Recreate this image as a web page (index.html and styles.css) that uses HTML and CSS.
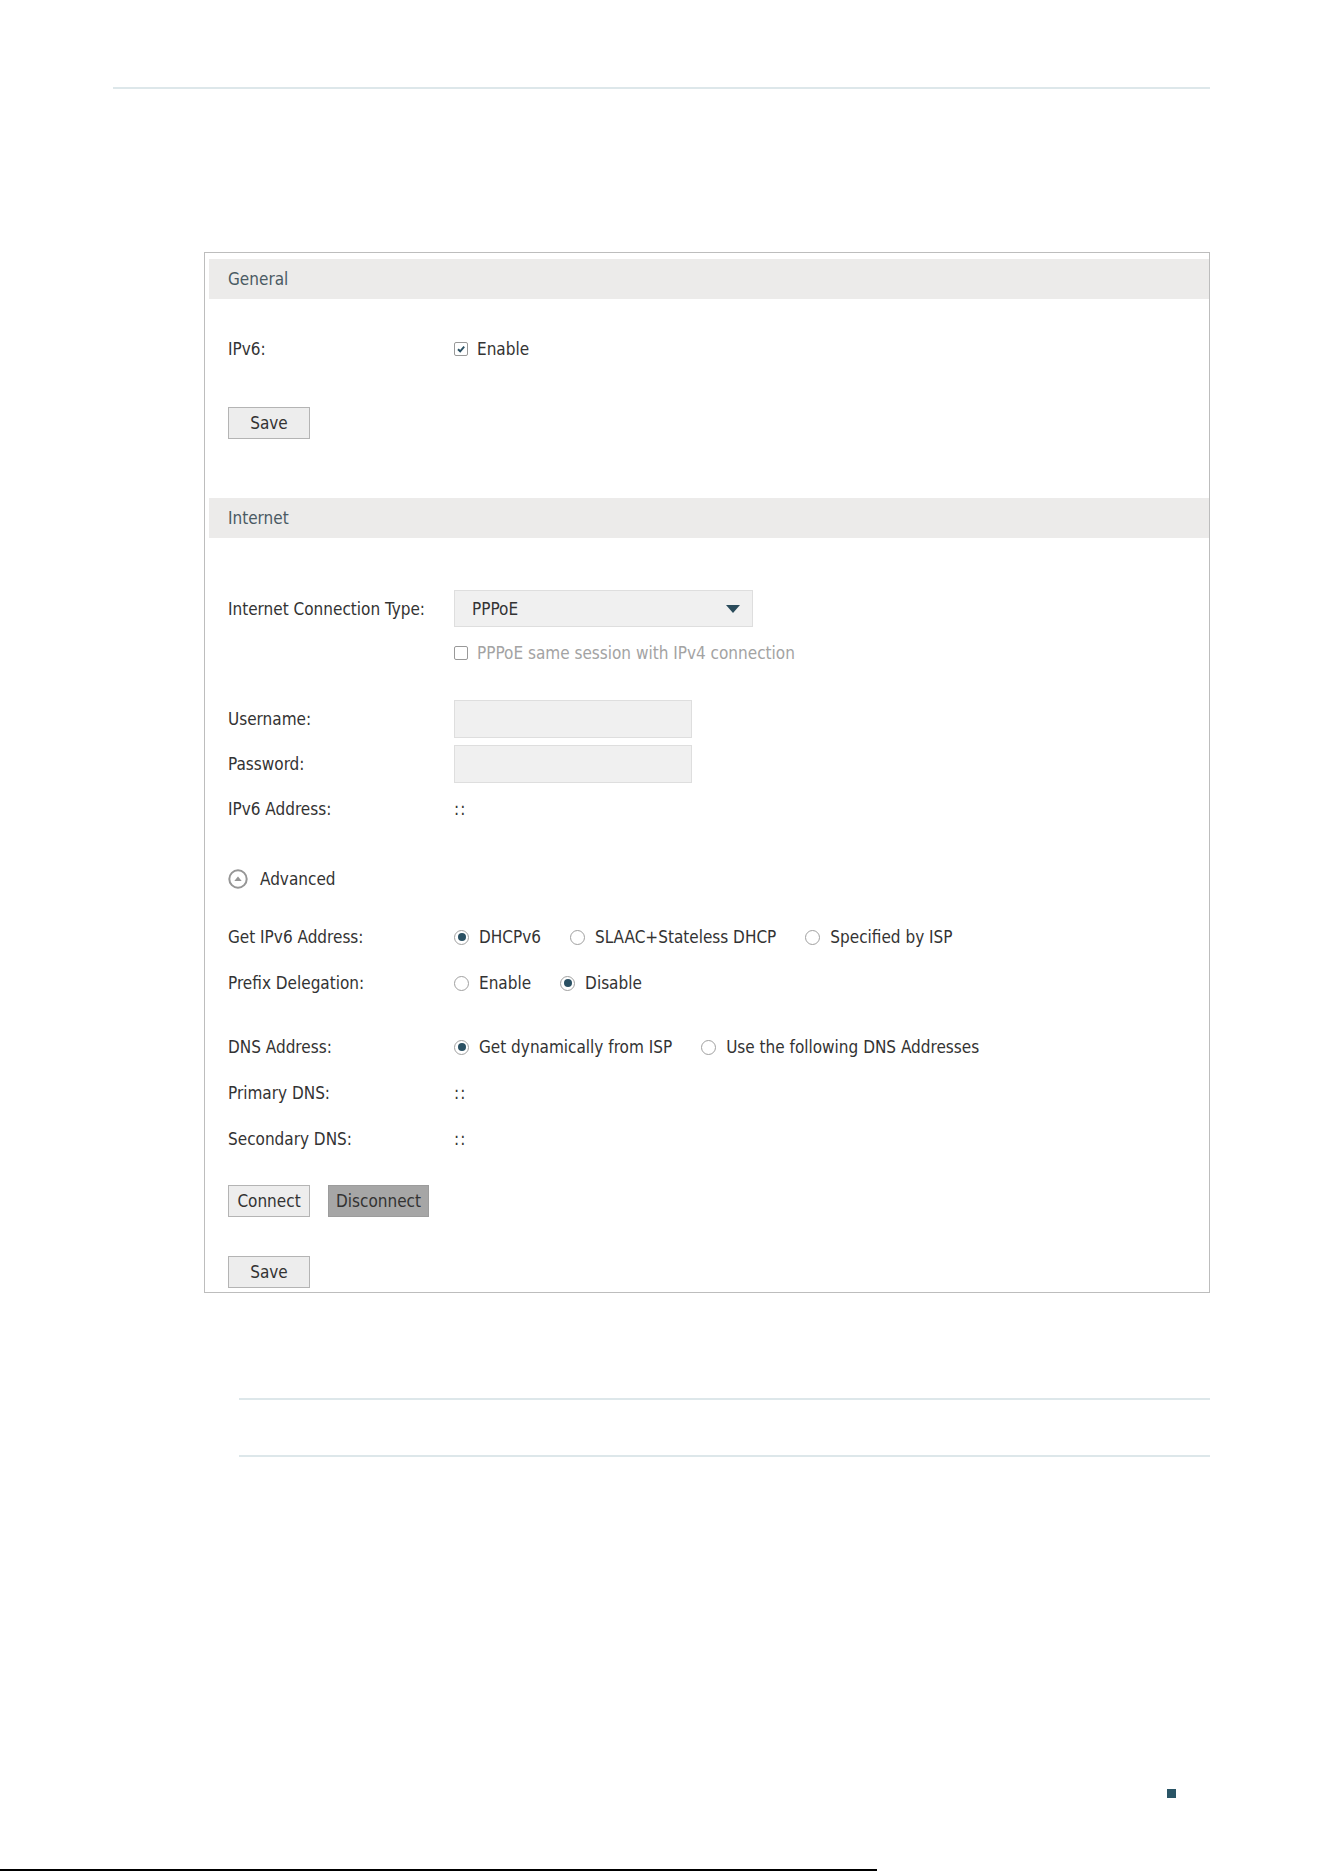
FILE: index.html
```html
<!DOCTYPE html>
<html lang="en">

<head>
    <meta charset="UTF-8">
    <meta name="viewport" content="width=device-width, initial-scale=1.0">
    <title>IPv6 | Internet</title>
    <link rel="stylesheet" href="styles.css">
</head>

<body>
    <div class="page">
        <div class="top-rule"></div>

        <div class="panel">
            <div class="section-head">General</div>
            <div class="section-body">
                <div class="row row-first">
                    <span class="label">IPv6:</span>
                    <label class="check">
                        <span class="box checked">
                            <svg viewBox="0 0 10 10" width="10" height="10"><path d="M2 5.2 L4.2 7.3 L8.2 2.6" fill="none" stroke="#2a5063" stroke-width="1.9"/></svg>
                        </span>
                        Enable
                    </label>
                </div>
                <div class="actions actions-save1">
                    <button class="btn">Save</button>
                </div>
            </div>

            <div class="section-head head-internet">Internet</div>
            <div class="section-body">
                <div class="row row-type">
                    <span class="label">Internet Connection Type:</span>
                    <div class="select">
                        <span>PPPoE</span>
                        <span class="caret"></span>
                    </div>
                </div>
                <div class="row row-tight">
                    <span class="label"></span>
                    <label class="check disabled">
                        <span class="box"></span>
                        PPPoE same session with IPv4 connection
                    </label>
                </div>
                <div class="row row-input row-user">
                    <span class="label">Username:</span>
                    <input class="field" type="text">
                </div>
                <div class="row row-input row-pass">
                    <span class="label">Password:</span>
                    <input class="field" type="password">
                </div>
                <div class="row row-tight">
                    <span class="label">IPv6 Address:</span>
                    <span class="value">::</span>
                </div>

                <div class="row row-adv">
                    <span class="adv-icon">
                        <svg viewBox="0 0 20 20" width="20" height="20">
                            <circle cx="10" cy="10" r="8.7" fill="none" stroke="#969696" stroke-width="2"/>
                            <path d="M6.3 12 L10 7.4 L13.7 12 Z" fill="#969696"/>
                        </svg>
                    </span>
                    <span class="adv-text">Advanced</span>
                </div>

                <div class="row row-getip">
                    <span class="label">Get IPv6 Address:</span>
                    <div class="options">
                        <label class="radio"><span class="dot on"></span>DHCPv6</label>
                        <label class="radio"><span class="dot"></span>SLAAC+Stateless DHCP</label>
                        <label class="radio"><span class="dot"></span>Specified by ISP</label>
                    </div>
                </div>
                <div class="row row-prefix">
                    <span class="label">Prefix Delegation:</span>
                    <div class="options">
                        <label class="radio"><span class="dot"></span>Enable</label>
                        <label class="radio"><span class="dot on"></span>Disable</label>
                    </div>
                </div>
                <div class="row row-dns">
                    <span class="label">DNS Address:</span>
                    <div class="options">
                        <label class="radio"><span class="dot on"></span>Get dynamically from ISP</label>
                        <label class="radio"><span class="dot"></span>Use the following DNS Addresses</label>
                    </div>
                </div>
                <div class="row row-follow">
                    <span class="label">Primary DNS:</span>
                    <span class="value">::</span>
                </div>
                <div class="row row-follow">
                    <span class="label">Secondary DNS:</span>
                    <span class="value">::</span>
                </div>

                <div class="actions actions-conn">
                    <button class="btn">Connect</button>
                    <button class="btn btn-dark">Disconnect</button>
                </div>
                <div class="actions actions-save2">
                    <button class="btn">Save</button>
                </div>
            </div>
        </div>

        <div class="notes">
            <div class="note-rule"></div>
            <div class="note-rule rule-second"></div>
        </div>

        <div class="page-mark"></div>
        <div class="bottom-bar"></div>
    </div>
</body>

</html>
```

FILE: styles.css
```css
body {
    margin: 0;
    font-family: "DejaVu Sans Condensed", "DejaVu Sans", sans-serif;
    font-size: 17px;
    color: #333;
    background: #fff;
}

.page {
    width: 1324px;
    height: 1872px;
    position: relative;
    overflow: hidden;
}

.top-rule {
    margin: 87px 0 0 113px;
    width: 1097px;
    height: 2px;
    background-color: #dde7ea;
}

.panel {
    margin: 163px 0 0 204px;
    width: 1006px;
    box-sizing: border-box;
    border: 1px solid #bdbdbd;
    padding: 6px 0 4px 4px;
}

.section-head {
    height: 40px;
    line-height: 40px;
    background-color: #ecebea;
    padding-left: 19px;
    color: #4a5a63;
}

.head-internet {
    margin-top: 59px;
}

.section-body {
    padding-left: 19px;
}

.row {
    display: flex;
    align-items: center;
    height: 30px;
}

.label {
    width: 226px;
    flex-shrink: 0;
}

.row-first {
    margin-top: 35px;
}

.row-type {
    height: 37px;
    margin-top: 52px;
}

.row-tight {
    margin-top: 11px;
}

.row-input {
    height: 38px;
}

.row-user {
    margin-top: 32px;
}

.row-pass {
    margin-top: 7px;
}

.row-adv {
    margin-top: 40px;
}

.row-getip {
    margin-top: 28px;
}

.row-prefix {
    margin-top: 16px;
}

.row-dns {
    margin-top: 34px;
}

.row-follow {
    margin-top: 16px;
}

.check {
    display: flex;
    align-items: center;
    gap: 9px;
}

.check.disabled {
    color: #a3a3a3;
}

.box {
    width: 12px;
    height: 12px;
    border: 1px solid #999;
    border-radius: 2px;
    display: flex;
    align-items: center;
    justify-content: center;
    background: #fff;
}

.select {
    width: 299px;
    height: 37px;
    box-sizing: border-box;
    background-color: #f0f0f0;
    border: 1px solid #dedede;
    display: flex;
    align-items: center;
    justify-content: space-between;
    padding: 0 12px 0 17px;
    color: #333;
}

.caret {
    width: 0;
    height: 0;
    border-left: 7px solid transparent;
    border-right: 7px solid transparent;
    border-top: 8px solid #2a4b5b;
}

.field {
    width: 238px;
    height: 38px;
    box-sizing: border-box;
    background-color: #f0f0f0;
    border: 1px solid #dedede;
    margin: 0;
}

.value {
    letter-spacing: 1px;
}

.adv-icon {
    width: 20px;
    height: 20px;
    display: flex;
    margin-right: 12px;
}

.options {
    display: flex;
    align-items: center;
}

.radio {
    display: flex;
    align-items: center;
    margin-right: 29px;
}

.dot {
    width: 13px;
    height: 13px;
    border: 1px solid #a0a0a0;
    border-radius: 50%;
    margin-right: 10px;
    box-sizing: content-box;
    display: flex;
    align-items: center;
    justify-content: center;
    background: #fff;
}

.dot.on::after {
    content: "";
    width: 8px;
    height: 8px;
    border-radius: 50%;
    background-color: #2a5063;
}

.actions {
    display: flex;
    gap: 18px;
}

.actions-save1 {
    margin-top: 43px;
}

.actions-conn {
    margin-top: 31px;
}

.actions-save2 {
    margin-top: 39px;
}

.btn {
    font-family: inherit;
    font-size: 17px;
    color: #333;
    background-color: #ededed;
    border: 1px solid #b4b4b4;
    height: 32px;
    min-width: 82px;
    padding: 0 7px;
    cursor: pointer;
}

.btn-dark {
    background-color: #a6a6a6;
    border-color: #9c9c9c;
}

.notes {
    margin: 105px 0 0 239px;
    width: 971px;
}

.note-rule {
    height: 2px;
    background-color: #dde7ea;
}

.rule-second {
    margin-top: 55px;
}

.page-mark {
    position: absolute;
    left: 1167px;
    top: 1789px;
    width: 9px;
    height: 9px;
    background-color: #2a5566;
}

.bottom-bar {
    position: absolute;
    left: 0;
    bottom: 1px;
    width: 877px;
    height: 2px;
    background-color: #000;
}
```
